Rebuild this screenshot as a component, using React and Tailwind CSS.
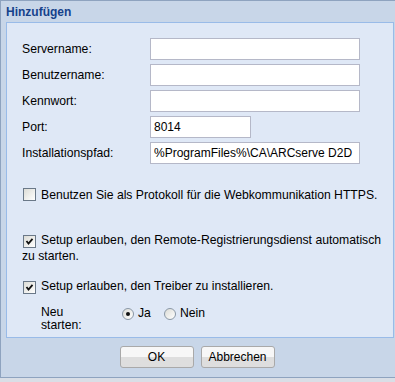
import React from 'react';

// XP-style checkbox
function CheckBox({ checked }) {
    return (
        <span className="mr-[5px] ml-[1px] inline-flex h-[13px] w-[13px] items-center justify-center border border-[#6a7888] bg-gradient-to-br from-[#dcdcd6] to-white align-[-2px]">
            {checked && (
                <svg width="9" height="9" viewBox="0 0 9 9">
                    <path d="M1.5 4 L3.5 6.5 L7.5 1.8" fill="none" stroke="#111" strokeWidth="1.8" />
                </svg>
            )}
        </span>
    );
}

function Radio({ checked, label }) {
    return (
        <label className="flex items-center">
            <span className="mr-[4px] flex h-[12px] w-[12px] items-center justify-center rounded-full border border-[#8a97a5] bg-gradient-to-br from-[#dcdcd6] to-white">
                {checked && <span className="h-[4px] w-[4px] rounded-full bg-[#111]" />}
            </span>
            <span>{label}</span>
        </label>
    );
}

function Field({ label, value = '', width = 'w-[210px]' }) {
    return (
        <div className="flex h-[22px] items-center">
            <div className="w-[128px]">{label}</div>
            <input
                className={`h-[22px] ${width} border border-[#b5b8c8] bg-white px-[3px] text-[12px] text-black outline-none`}
                value={value}
                readOnly
            />
        </div>
    );
}

export default function App() {
    return (
        <div className="h-[382px] w-[395px] overflow-hidden bg-[#d9dee6] font-['Liberation_Sans',Arial,sans-serif] text-[12.2px] text-black">
            <div className="flex h-[378px] flex-col border-t border-b border-l border-[#8ea3bf] bg-[#c8d6e8]">
                {/* Title */}
                <div className="flex h-[21px] items-center pl-[5px] text-[12px] font-bold text-[#15428b]">Hinzufügen</div>

                {/* Body panel */}
                <div className="ml-[5px] h-[316px] w-[388px] border border-[#99bbe8] bg-[#dfe8f6] pt-[15px] pl-[15px] pr-[4px]">
                    <div className="flex flex-col gap-[4px]">
                        <Field label="Servername:" />
                        <Field label="Benutzername:" />
                        <Field label="Kennwort:" />
                        <Field label="Port:" value="8014" width="w-[101px]" />
                        <Field label="Installationspfad:" value="%ProgramFiles%\CA\ARCserve D2D" />
                    </div>

                    <div className="mt-[23px] leading-[16px]">
                        <CheckBox />Benutzen Sie als Protokoll für die Webkommunikation HTTPS.
                    </div>
                    <div className="mt-[29px] leading-[16px]">
                        <CheckBox checked />Setup erlauben, den Remote-Registrierungsdienst automatisch<br />zu starten.
                    </div>
                    <div className="mt-[14px] leading-[16px]">
                        <CheckBox checked />Setup erlauben, den Treiber zu installieren.
                    </div>

                    <div className="mt-[12px] flex">
                        <div className="w-[100px] pl-[19px] leading-[13px]">Neu<br />starten:</div>
                        <div className="flex h-[15px] gap-[13px]">
                            <Radio checked label="Ja" />
                            <Radio label="Nein" />
                        </div>
                    </div>
                </div>

                {/* Buttons */}
                <div className="flex justify-center gap-[7px] pt-[8px] pr-[2px]">
                    <button className="h-[22px] w-[74px] rounded-[3px] border border-[#a9a9a9] bg-gradient-to-b from-[#f7f7f7] from-50% to-[#dedede] to-50% text-[12px]">OK</button>
                    <button className="h-[22px] w-[74px] rounded-[3px] border border-[#a9a9a9] bg-gradient-to-b from-[#f7f7f7] from-50% to-[#dedede] to-50% text-[12px]">Abbrechen</button>
                </div>
            </div>
        </div>
    );
}
